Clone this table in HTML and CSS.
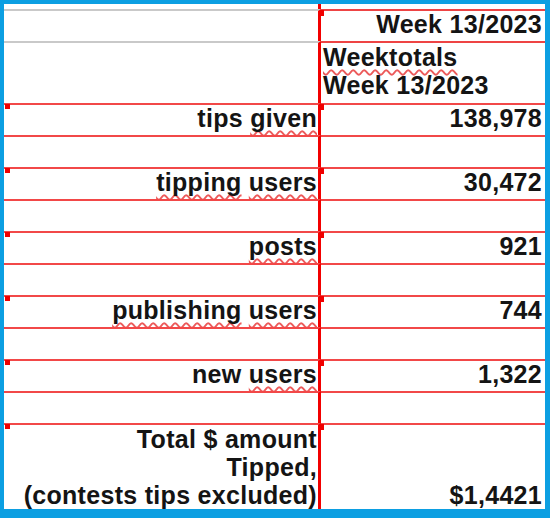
FILE: index.html
```html
<!DOCTYPE html>
<html>
<head>
<meta charset="utf-8">
<link rel="stylesheet" href="styles.css">
</head>
<body>
<div class="frame">
  <div class="sheet">
    <div class="cell lab spacer"></div>
    <div class="cell val spacer"></div>

    <div class="cell lab head"></div>
    <div class="cell val head mark r">Week 13/2023</div>

    <div class="cell lab head2"></div>
    <div class="cell val head2 l"><span class="sp">Weektotals</span><br>Week 13/2023</div>

    <div class="cell lab row mark">tips <span class="sp">given</span></div>
    <div class="cell val row mark r">138,978</div>
    <div class="cell lab row"></div>
    <div class="cell val row"></div>

    <div class="cell lab row mark"><span class="sp">tipping</span> <span class="sp">users</span></div>
    <div class="cell val row mark r">30,472</div>
    <div class="cell lab row"></div>
    <div class="cell val row"></div>

    <div class="cell lab row mark"><span class="sp">posts</span></div>
    <div class="cell val row mark r">921</div>
    <div class="cell lab row"></div>
    <div class="cell val row"></div>

    <div class="cell lab row mark"><span class="sp">publishing</span> <span class="sp">users</span></div>
    <div class="cell val row mark r">744</div>
    <div class="cell lab row"></div>
    <div class="cell val row"></div>

    <div class="cell lab row mark">new <span class="sp">users</span></div>
    <div class="cell val row mark r">1,322</div>
    <div class="cell lab row"></div>
    <div class="cell val row"></div>

    <div class="cell lab row total mark">Total $ amount<br>Tipped,<br>(contests tips excluded)</div>
    <div class="cell val row total mark r bottom">$1,4421</div>
  </div>
</div>
</body>
</html>
```

FILE: styles.css
```css
html, body {
  margin: 0;
  padding: 0;
  background: #ffffff;
}

.frame {
  width: 550px;
  height: 518px;
  box-sizing: border-box;
  border-style: solid;
  border-color: #0c9fe2;
  border-width: 4px 5px 9px 4px;
  background: #ffffff;
  overflow: hidden;
}

.sheet {
  display: grid;
  grid-template-columns: 317px 1fr;
  grid-template-rows: 5px 32px 62px repeat(10, 32px) 86px;
  font-family: "Liberation Sans", Arial, sans-serif;
  font-weight: bold;
  font-size: 25px;
  letter-spacing: 0.3px;
  color: #141414;
}

.cell {
  position: relative;
  box-sizing: border-box;
  white-space: nowrap;
  overflow: visible;
}

.lab {
  border-right: 3px solid #f20000;
  text-align: right;
  padding-right: 1px;
}

.val {
  padding-left: 2px;
  padding-right: 3px;
}

.r { text-align: right; }
.l { text-align: left; }

.head {
  border-top: 2px solid #ee4444;
  line-height: 26px;
}
.head2 {
  border-top: 2px solid #ee4444;
  line-height: 28px;
}
.lab.head, .lab.head2 {
  border-top-color: #c9c9c9;
}

.row {
  border-top: 2px solid #f24848;
  line-height: 26px;
}

.total {
  line-height: 28px;
}

.bottom {
  display: flex;
  align-items: flex-end;
  justify-content: flex-end;
}

.sp {
  text-decoration: underline wavy #ec5a5a;
  text-decoration-thickness: 1.5px;
  text-underline-offset: 3px;
  text-decoration-skip-ink: none;
}

.lab.mark::before {
  content: "";
  position: absolute;
  left: 1px;
  top: -1px;
  width: 5px;
  height: 5px;
  background: #f00000;
}

.val.mark::before {
  content: "";
  position: absolute;
  left: 0;
  top: -1px;
  width: 3px;
  height: 6px;
  background: #f00000;
}
```
